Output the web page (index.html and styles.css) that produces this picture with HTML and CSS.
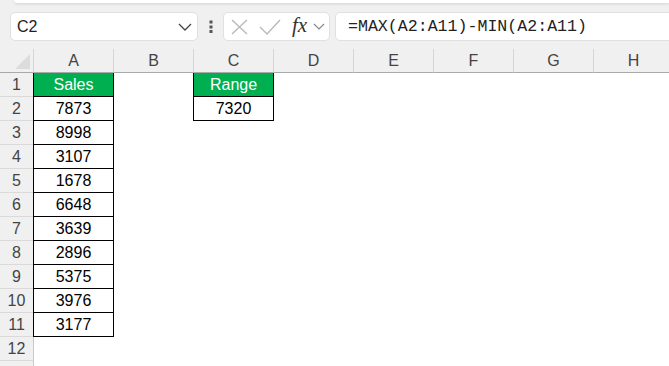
FILE: index.html
```html
<!DOCTYPE html>
<html lang="en">
<head>
    <meta charset="UTF-8">
    <title>Range formula</title>
    <link rel="stylesheet" href="styles.css">
</head>
<body>
    <div class="ribbon-edge"></div>

    <!-- name box + formula bar -->
    <div class="formula-row">
        <div class="name-box">
            <span>C2</span>
            <svg class="chev" width="14" height="8" viewBox="0 0 14 8"><polyline points="1,1 7,7 13,1" fill="none" stroke="#444" stroke-width="1.3"/></svg>
        </div>
        <svg class="grip" width="4" height="14" viewBox="0 0 4 14">
            <rect x="0.5" y="0.5" width="3" height="3" fill="#555"/>
            <rect x="0.5" y="5.5" width="3" height="3" fill="#555"/>
            <rect x="0.5" y="10" width="3" height="3" fill="#555"/>
        </svg>
        <div class="fn-box">
            <svg width="17" height="16" viewBox="0 0 17 16"><path d="M1 1 L16 15 M16 1 L1 15" stroke="#b9b9b9" stroke-width="1.4" fill="none"/></svg>
            <svg class="check" width="22" height="16" viewBox="0 0 22 16"><polyline points="1,8 8,15 21,1" fill="none" stroke="#b9b9b9" stroke-width="1.4"/></svg>
            <span class="fx">fx</span>
            <svg class="chev-small" width="12" height="7" viewBox="0 0 12 7"><polyline points="1,1 6,6 11,1" fill="none" stroke="#888" stroke-width="1.2"/></svg>
        </div>
        <div class="formula-input">=MAX(A2:A11)-MIN(A2:A11)</div>
    </div>

    <!-- sheet -->
    <div class="sheet" id="sheet"></div>

    <script>
        const sales = [7873, 8998, 3107, 1678, 6648, 3639, 2896, 5375, 3976, 3177];
        const cols = ['A', 'B', 'C', 'D', 'E', 'F', 'G', 'H'];
        const sheet = document.getElementById('sheet');

        function addCell(cls, text) {
            const div = document.createElement('div');
            div.className = cls;
            if (text !== undefined) div.textContent = text;
            sheet.appendChild(div);
        }

        // header row
        addCell('corner');
        cols.forEach(c => addCell('col-head', c));

        // row 13 only peeks in at the bottom edge, so no number for it
        for (let r = 1; r <= 13; r++) {
            addCell('row-head', r < 13 ? r : '');
            cols.forEach(c => {
                let cls = 'cell';
                let text = '';
                if (c === 'A' && r === 1) { cls += ' boxed head-green'; text = 'Sales'; }
                else if (c === 'A' && r <= 11) { cls += ' boxed'; text = sales[r - 2]; }
                else if (c === 'C' && r === 1) { cls += ' boxed head-green'; text = 'Range'; }
                else if (c === 'C' && r === 2) { cls += ' boxed'; text = 7320; }
                addCell(cls, text);
            });
        }
    </script>
</body>
</html>
```

FILE: styles.css
```css
body {
    margin: 0;
    background: #f0f0f0;
    font-family: "Liberation Sans", Arial, sans-serif;
    overflow: hidden;
    height: 366px;
}

.ribbon-edge {
    height: 3px;
    margin-left: 14px;
    background: #fff;
    border-bottom-left-radius: 6px;
    box-shadow: 0 1px 3px rgba(0, 0, 0, 0.12);
}

/* name box / formula bar */
.formula-row {
    display: flex;
    align-items: center;
    padding: 9px 0 0 10px;
    height: 29px;
    margin-bottom: 8px;
}

.name-box {
    box-sizing: border-box;
    width: 188px;
    height: 29px;
    background: #fff;
    border: 1px solid #e0e0e0;
    border-radius: 5px;
    display: flex;
    align-items: center;
    padding: 0 5px 0 6px;
    font-size: 16px;
    color: #222;
}

.name-box span {
    flex: 1;
}

.chev {
    margin-top: 1px;
}

.grip {
    margin-left: 11px;
    margin-right: 10px;
}

.fn-box {
    box-sizing: border-box;
    width: 107px;
    height: 29px;
    background: #fff;
    border: 1px solid #e0e0e0;
    border-radius: 5px;
    display: flex;
    align-items: center;
    padding-left: 7px;
}

.check {
    margin-left: 11px;
}

.fx {
    margin-left: 11px;
    font-family: "Liberation Serif", "Times New Roman", serif;
    font-style: italic;
    font-size: 21px;
    color: #333;
    margin-top: -2px;
}

.chev-small {
    margin-left: 6px;
}

.formula-input {
    box-sizing: border-box;
    flex: 1;
    height: 29px;
    margin-left: 5px;
    margin-right: -10px;
    background: #fff;
    border: 1px solid #e0e0e0;
    border-radius: 5px;
    padding-left: 12px;
    font-family: "Liberation Mono", "DejaVu Sans Mono", monospace;
    font-size: 16.6px;
    line-height: 27px;
    color: #222;
}

/* grid */
.sheet {
    display: grid;
    grid-template-columns: 34px repeat(8, 80px);
    grid-auto-rows: 24px;
    background: #fff;
}

.corner,
.col-head,
.row-head {
    box-sizing: border-box;
    background: #f0f0f0;
    color: #444;
    font-size: 16px;
    display: flex;
    align-items: center;
    justify-content: center;
}

.corner {
    border-right: 1px solid #d6d6d6;
    border-bottom: 1px solid #a9a9a9;
    position: relative;
}

.corner::after {
    content: "";
    position: absolute;
    right: 3px;
    bottom: 3px;
    border-style: solid;
    border-width: 0 0 15px 15px;
    border-color: transparent transparent #dcdcdc transparent;
}

.col-head {
    border-right: 1px solid #d6d6d6;
    border-bottom: 1px solid #a9a9a9;
}

.row-head {
    border-right: 1px solid #c9c9c9;
    border-bottom: 1px solid #dadada;
    padding-top: 1px;
}

.cell {
    box-sizing: border-box;
    font-size: 16px;
    color: #000;
    display: flex;
    align-items: center;
    justify-content: center;
    padding-top: 1px;
}

.boxed {
    border-right: 1px solid #000;
    border-bottom: 1px solid #000;
    box-shadow: -1px 0 0 #000;
}

.head-green {
    background: #00b050;
    color: #fff;
}
```
